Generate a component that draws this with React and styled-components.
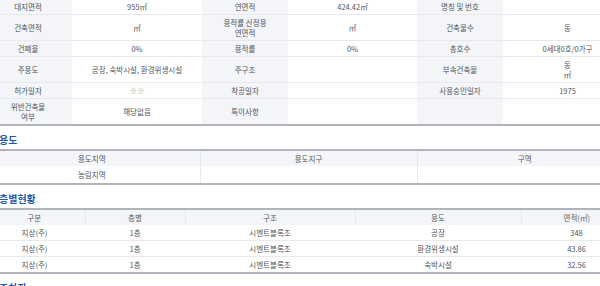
import React from "react";
import styled, { createGlobalStyle } from "styled-components";

const GlobalStyle = createGlobalStyle`
  html, body {
    margin: 0;
    padding: 0;
    background: #ffffff;
    overflow: hidden;
  }
  body {
    font-family: "Noto Sans CJK KR", "Noto Sans", sans-serif;
  }
`;

const Page = styled.div`
  width: 648px;
  margin: -1px 0 0 -16px;
`;

const Heading = styled.h3`
  margin: 0;
  padding: 7px 0 2px 15px;
  font-size: 10px;
  line-height: 14px;
  font-weight: 700;
  color: #1f5aa8;
`;

const Table = styled.table`
  width: 100%;
  table-layout: fixed;
  border-collapse: collapse;
  border-top: ${(p) => (p.noTop ? "none" : "2px solid #b1b5bb")};
  border-bottom: 2px solid #b1b5bb;
`;

const Col = styled.col`
  width: ${(p) => p.w}px;
`;

const Row = styled.tr`
  border-bottom: 1px solid #e7e9ec;
  &:last-child {
    border-bottom: none;
  }
`;

const Cell = styled.td`
  padding: ${(p) => (p.tall ? "4px 4px 3px" : "3px 4px 2px")};
  font-size: 7.5px;
  line-height: 10px;
  text-align: center;
  vertical-align: middle;
  color: ${(p) => (p.muted ? "#b0b0b0" : "#50555b")};
  background: ${(p) => (p.label ? "#f3f5f8" : "#ffffff")};
  border-right: ${(p) => (p.divide ? "1px solid #e7e9ec" : "none")};
  white-space: pre-line;
  &:last-child {
    border-right: none;
  }
`;

const HeadCell = styled.th`
  padding: 3px 4px 2px;
  font-size: 7.5px;
  line-height: 10px;
  font-weight: 400;
  text-align: center;
  color: #565b62;
  background: #f3f5f8;
  border-right: 1px solid #e4e7eb;
  &:last-child {
    border-right: none;
  }
`;

const overview = [
  ["대지면적", "955㎡", "연면적", "424.42㎡", "명칭 및 번호", ""],
  ["건축면적", "㎡", "용적률 산정용\n연면적", "㎡", "건축물수", "동"],
  ["건폐율", "0%", "용적률", "0%", "총호수", "0세대0호/0가구"],
  ["주용도", "공장, 숙박시설, 환경위생시설", "주구조", "", "부속건축물", "동\n㎡"],
  ["허가일자", "※※", "착공일자", "", "사용승인일자", "1975"],
  ["위반건축물\n여부", "해당없음", "특이사항", "", "", ""],
];

const floors = [
  ["지상(주)", "1층", "시멘트블록조", "공장", "348"],
  ["지상(주)", "1층", "시멘트블록조", "환경위생시설", "43.86"],
  ["지상(주)", "1층", "시멘트블록조", "숙박시설", "32.56"],
];

export default function App() {
  return (
    <>
      <GlobalStyle />
      <Page>
        <Table noTop>
          <colgroup>
            {[88, 130, 86, 129, 86, 129].map((w, i) => (
              <Col key={i} w={w} />
            ))}
          </colgroup>
          <tbody>
            {overview.map((r, i) => (
              <Row key={i}>
                {r.map((c, j) => (
                  <Cell key={j} label={j % 2 === 0} muted={c === "※※"}>
                    {c}
                  </Cell>
                ))}
              </Row>
            ))}
          </tbody>
        </Table>

        <Heading>용도</Heading>
        <Table>
          <colgroup>
            <Col w={216} />
            <Col w={217} />
            <Col w={215} />
          </colgroup>
          <thead>
            <Row>
              <HeadCell>용도지역</HeadCell>
              <HeadCell>용도지구</HeadCell>
              <HeadCell>구역</HeadCell>
            </Row>
          </thead>
          <tbody>
            <Row>
              <Cell divide tall>농림지역</Cell>
              <Cell divide tall></Cell>
              <Cell tall></Cell>
            </Row>
          </tbody>
        </Table>

        <Heading>층별현황</Heading>
        <Table>
          <colgroup>
            {[101, 100, 170, 166, 111].map((w, i) => (
              <Col key={i} w={w} />
            ))}
          </colgroup>
          <thead>
            <Row>
              <HeadCell>구분</HeadCell>
              <HeadCell>층별</HeadCell>
              <HeadCell>구조</HeadCell>
              <HeadCell>용도</HeadCell>
              <HeadCell>면적(㎡)</HeadCell>
            </Row>
          </thead>
          <tbody>
            {floors.map((r, i) => (
              <Row key={i}>
                {r.map((c, j) => (
                  <Cell key={j}>{c}</Cell>
                ))}
              </Row>
            ))}
          </tbody>
        </Table>

        <Heading>주차장</Heading>
      </Page>
    </>
  );
}
